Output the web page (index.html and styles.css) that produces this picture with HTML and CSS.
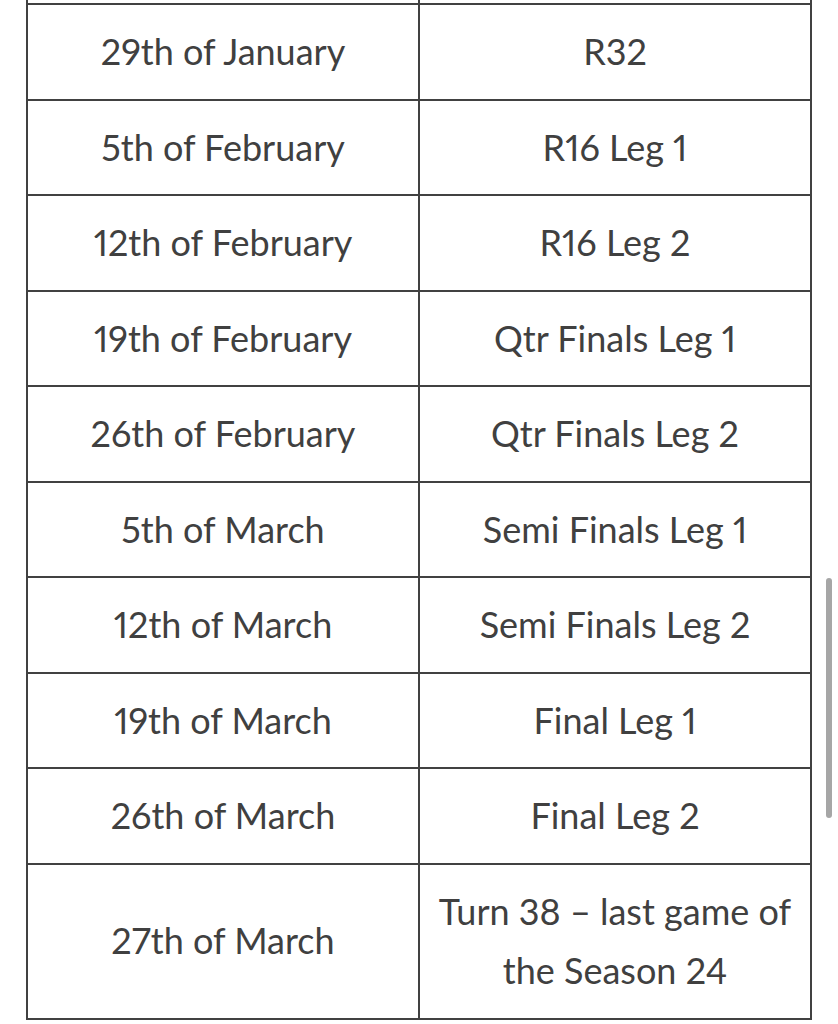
FILE: index.html
```html
<!DOCTYPE html>
<html lang="en">
<head>
<meta charset="utf-8">
<title>Schedule</title>
<link rel="stylesheet" href="styles.css">
</head>
<body>
<div class="page">
  <table class="schedule">
    <tr class="cut"><td></td><td></td></tr>
    <tr><td>29th of January</td><td>R32</td></tr>
    <tr><td>5th of February</td><td>R16 Leg 1</td></tr>
    <tr><td>12th of February</td><td>R16 Leg 2</td></tr>
    <tr><td>19th of February</td><td>Qtr Finals Leg 1</td></tr>
    <tr><td>26th of February</td><td>Qtr Finals Leg 2</td></tr>
    <tr><td>5th of March</td><td>Semi Finals Leg 1</td></tr>
    <tr><td>12th of March</td><td>Semi Finals Leg 2</td></tr>
    <tr><td>19th of March</td><td>Final Leg 1</td></tr>
    <tr><td>26th of March</td><td>Final Leg 2</td></tr>
    <tr><td>27th of March</td><td>Turn 38 – last game of the Season 24</td></tr>
  </table>
  <div class="scrollbar"></div>
</div>
</body>
</html>
```

FILE: styles.css
```css
html, body {
  margin: 0;
  padding: 0;
  background: #ffffff;
}

.page {
  position: relative;
  width: 838px;
  height: 1024px;
  overflow: hidden;
  padding-left: 26px;
  box-sizing: border-box;
}

.schedule {
  border-collapse: collapse;
  width: 786px;
  table-layout: fixed;
  font-family: "Lato", "Open Sans", sans-serif;
  font-size: 36px;
  font-variant-numeric: proportional-nums;
  color: #404040;
}

.schedule td {
  border: 2px solid #414141;
  text-align: center;
  vertical-align: middle;
  line-height: 59.5px;
  padding: 17px 12px;
}

.schedule tr.cut td {
  border-top: none;
  padding: 0;
  height: 3px;
  line-height: 0;
}

.scrollbar {
  position: absolute;
  left: 826px;
  top: 578px;
  width: 6px;
  height: 240px;
  border-radius: 3px;
  background: #a6a6a6;
}
```
